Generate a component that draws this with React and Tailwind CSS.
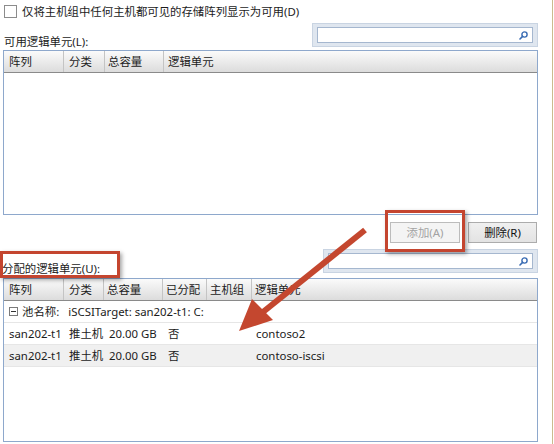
import React from "react";

function SearchBox({ w }) {
  return (
    <div className={`${w} h-[24px] border border-[#c9d4e2] bg-[#dfe6ef] px-[4px] py-[3px]`}>
      <div className="h-full border border-[#a5b7cf] bg-white flex items-center justify-end pr-[4px]">
        <svg width="9" height="9" viewBox="0 0 9 9">
          <circle cx="5.5" cy="3.5" r="2.6" fill="none" stroke="#3a6cb3" strokeWidth="1.4" />
          <line x1="3.6" y1="5.4" x2="1" y2="8" stroke="#3a6cb3" strokeWidth="1.6" strokeLinecap="round" />
        </svg>
      </div>
    </div>
  );
}

function Header({ cols }) {
  return (
    <div className="flex h-[22px] bg-gradient-to-b from-[#fbfbfb] to-[#dcdcdc] border-b border-[#8a8a8a] shrink-0">
      {cols.map((c, i) => (
        <div
          key={i}
          className={`${c.w} flex items-center ${c.pl} ${i < cols.length - 1 ? "border-r border-[#c4c4c4]" : ""} whitespace-nowrap overflow-hidden`}
        >
          {c.t}
        </div>
      ))}
    </div>
  );
}

function Row({ cells, bg }) {
  const widths = ["w-[61px]", "w-[40px]", "w-[59px]", "w-[44px]", "w-[45px]", "flex-1"];
  const pls = ["pl-[5px]", "pl-[4px]", "pl-[4px]", "pl-[4px]", "pl-[4px]", "pl-[3px]"];
  return (
    <div className={`flex h-[22px] items-center border-b border-[#e6e6e6] ${bg}`}>
      {cells.map((c, i) => (
        <div key={i} className={`${widths[i]} ${pls[i]} whitespace-nowrap overflow-hidden`}>
          {c}
        </div>
      ))}
    </div>
  );
}

export default function App() {
  return (
    <div
      className="relative w-[554px] h-[444px] bg-white overflow-hidden flex text-[11.4px] text-[#1b1b1b] leading-[14px]"
      style={{ fontFamily: '"Noto Sans", "Noto Sans CJK SC", sans-serif' }}
    >
      <div className="w-[552px] h-full pl-[3px] pt-[4px]">
        <div className="w-[535px] flex flex-col">
          {/* checkbox row */}
          <div className="flex items-center h-[15px]">
            <div className="w-[13px] h-[13px] ml-[1px] border border-[#8c8c8c] bg-white" />
            <span className="ml-[5px]">仅将主机组中任何主机都可见的存储阵列显示为可用(D)</span>
          </div>

          {/* label + search */}
          <div className="mt-[4px] flex justify-between items-end">
            <span className="ml-[1px] mb-[-2px]">可用逻辑单元(L):</span>
            <SearchBox w="w-[226px]" />
          </div>

          {/* top list */}
          <div className="mt-[3px] h-[165px] border border-[#8ea8cc] flex flex-col bg-white">
            <Header
              cols={[
                { t: "阵列", w: "w-[60px]", pl: "pl-[5px]" },
                { t: "分类", w: "w-[41px]", pl: "pl-[5px]" },
                { t: "总容量", w: "w-[59px]", pl: "pl-[3px]" },
                { t: "逻辑单元", w: "flex-1", pl: "pl-[4px]" },
              ]}
            />
          </div>

          {/* buttons */}
          <div className="mt-[7px] flex justify-end gap-[8px] pr-[1px]">
            <div className="w-[70px] h-[21px] border border-[#bcbcbc] bg-[#f4f4f4] text-[#a3a3a3] flex items-center justify-center">
              添加(A)
            </div>
            <div className="w-[69px] h-[21px] border border-[#acacac] bg-gradient-to-b from-[#f0f0f0] to-[#e3e3e3] text-[#111] flex items-center justify-center">
              删除(R)
            </div>
          </div>

          {/* label + search lower */}
          <div className="mt-[6px] flex justify-between items-end">
            <span className="ml-[-1px] mb-[-3px]">分配的逻辑单元(U):</span>
            <SearchBox w="w-[215px]" />
          </div>

          {/* lower list */}
          <div className="mt-[5px] h-[164px] border border-[#8ea8cc] flex flex-col bg-white">
            <Header
              cols={[
                { t: "阵列", w: "w-[60px]", pl: "pl-[5px]" },
                { t: "分类", w: "w-[40px]", pl: "pl-[5px]" },
                { t: "总容量", w: "w-[59px]", pl: "pl-[3px]" },
                { t: "已分配", w: "w-[44px]", pl: "pl-[3px]" },
                { t: "主机组", w: "w-[45px]", pl: "pl-[3px]" },
                { t: "逻辑单元", w: "flex-1", pl: "pl-[3px]" },
              ]}
            />
            <div className="flex h-[22px] items-center border-b border-[#e6e6e6] pl-[5px] whitespace-nowrap">
              <div className="w-[9px] h-[9px] border border-[#7a7a7a] flex items-center justify-center">
                <div className="w-[5px] h-px bg-[#333]" />
              </div>
              <span className="ml-[4px]">池名称:</span>
              <span className="ml-[9px]">iSCSITarget: san202-t1: C:</span>
            </div>
            <Row cells={["san202-t1", "推土机", "20.00 GB", "否", "", "contoso2"]} bg="bg-white" />
            <Row cells={["san202-t1", "推土机", "20.00 GB", "否", "", "contoso-iscsi"]} bg="bg-[#f0f0f0]" />
          </div>
        </div>
      </div>
      <div className="w-px h-full bg-[#cbbb8e]" />
      <div className="w-px h-full bg-white" />

      {/* annotations */}
      <div className="absolute left-[385px] top-[210px] w-[80px] h-[42px] border-[3px] border-[#c4452f] shadow-[2px_2px_4px_rgba(0,0,0,0.35)]" />
      <div className="absolute left-0 top-[251px] w-[120px] h-[27px] border-[3px] border-[#c4452f] shadow-[2px_2px_4px_rgba(0,0,0,0.35)]" />
      <svg className="absolute left-0 top-0" width="554" height="444" viewBox="0 0 554 444">
        <line x1="365" y1="230" x2="258" y2="316" stroke="#c4472f" strokeWidth="6" />
        <polygon points="239,331 252,299 273,320" fill="#c4472f" />
      </svg>
    </div>
  );
}
